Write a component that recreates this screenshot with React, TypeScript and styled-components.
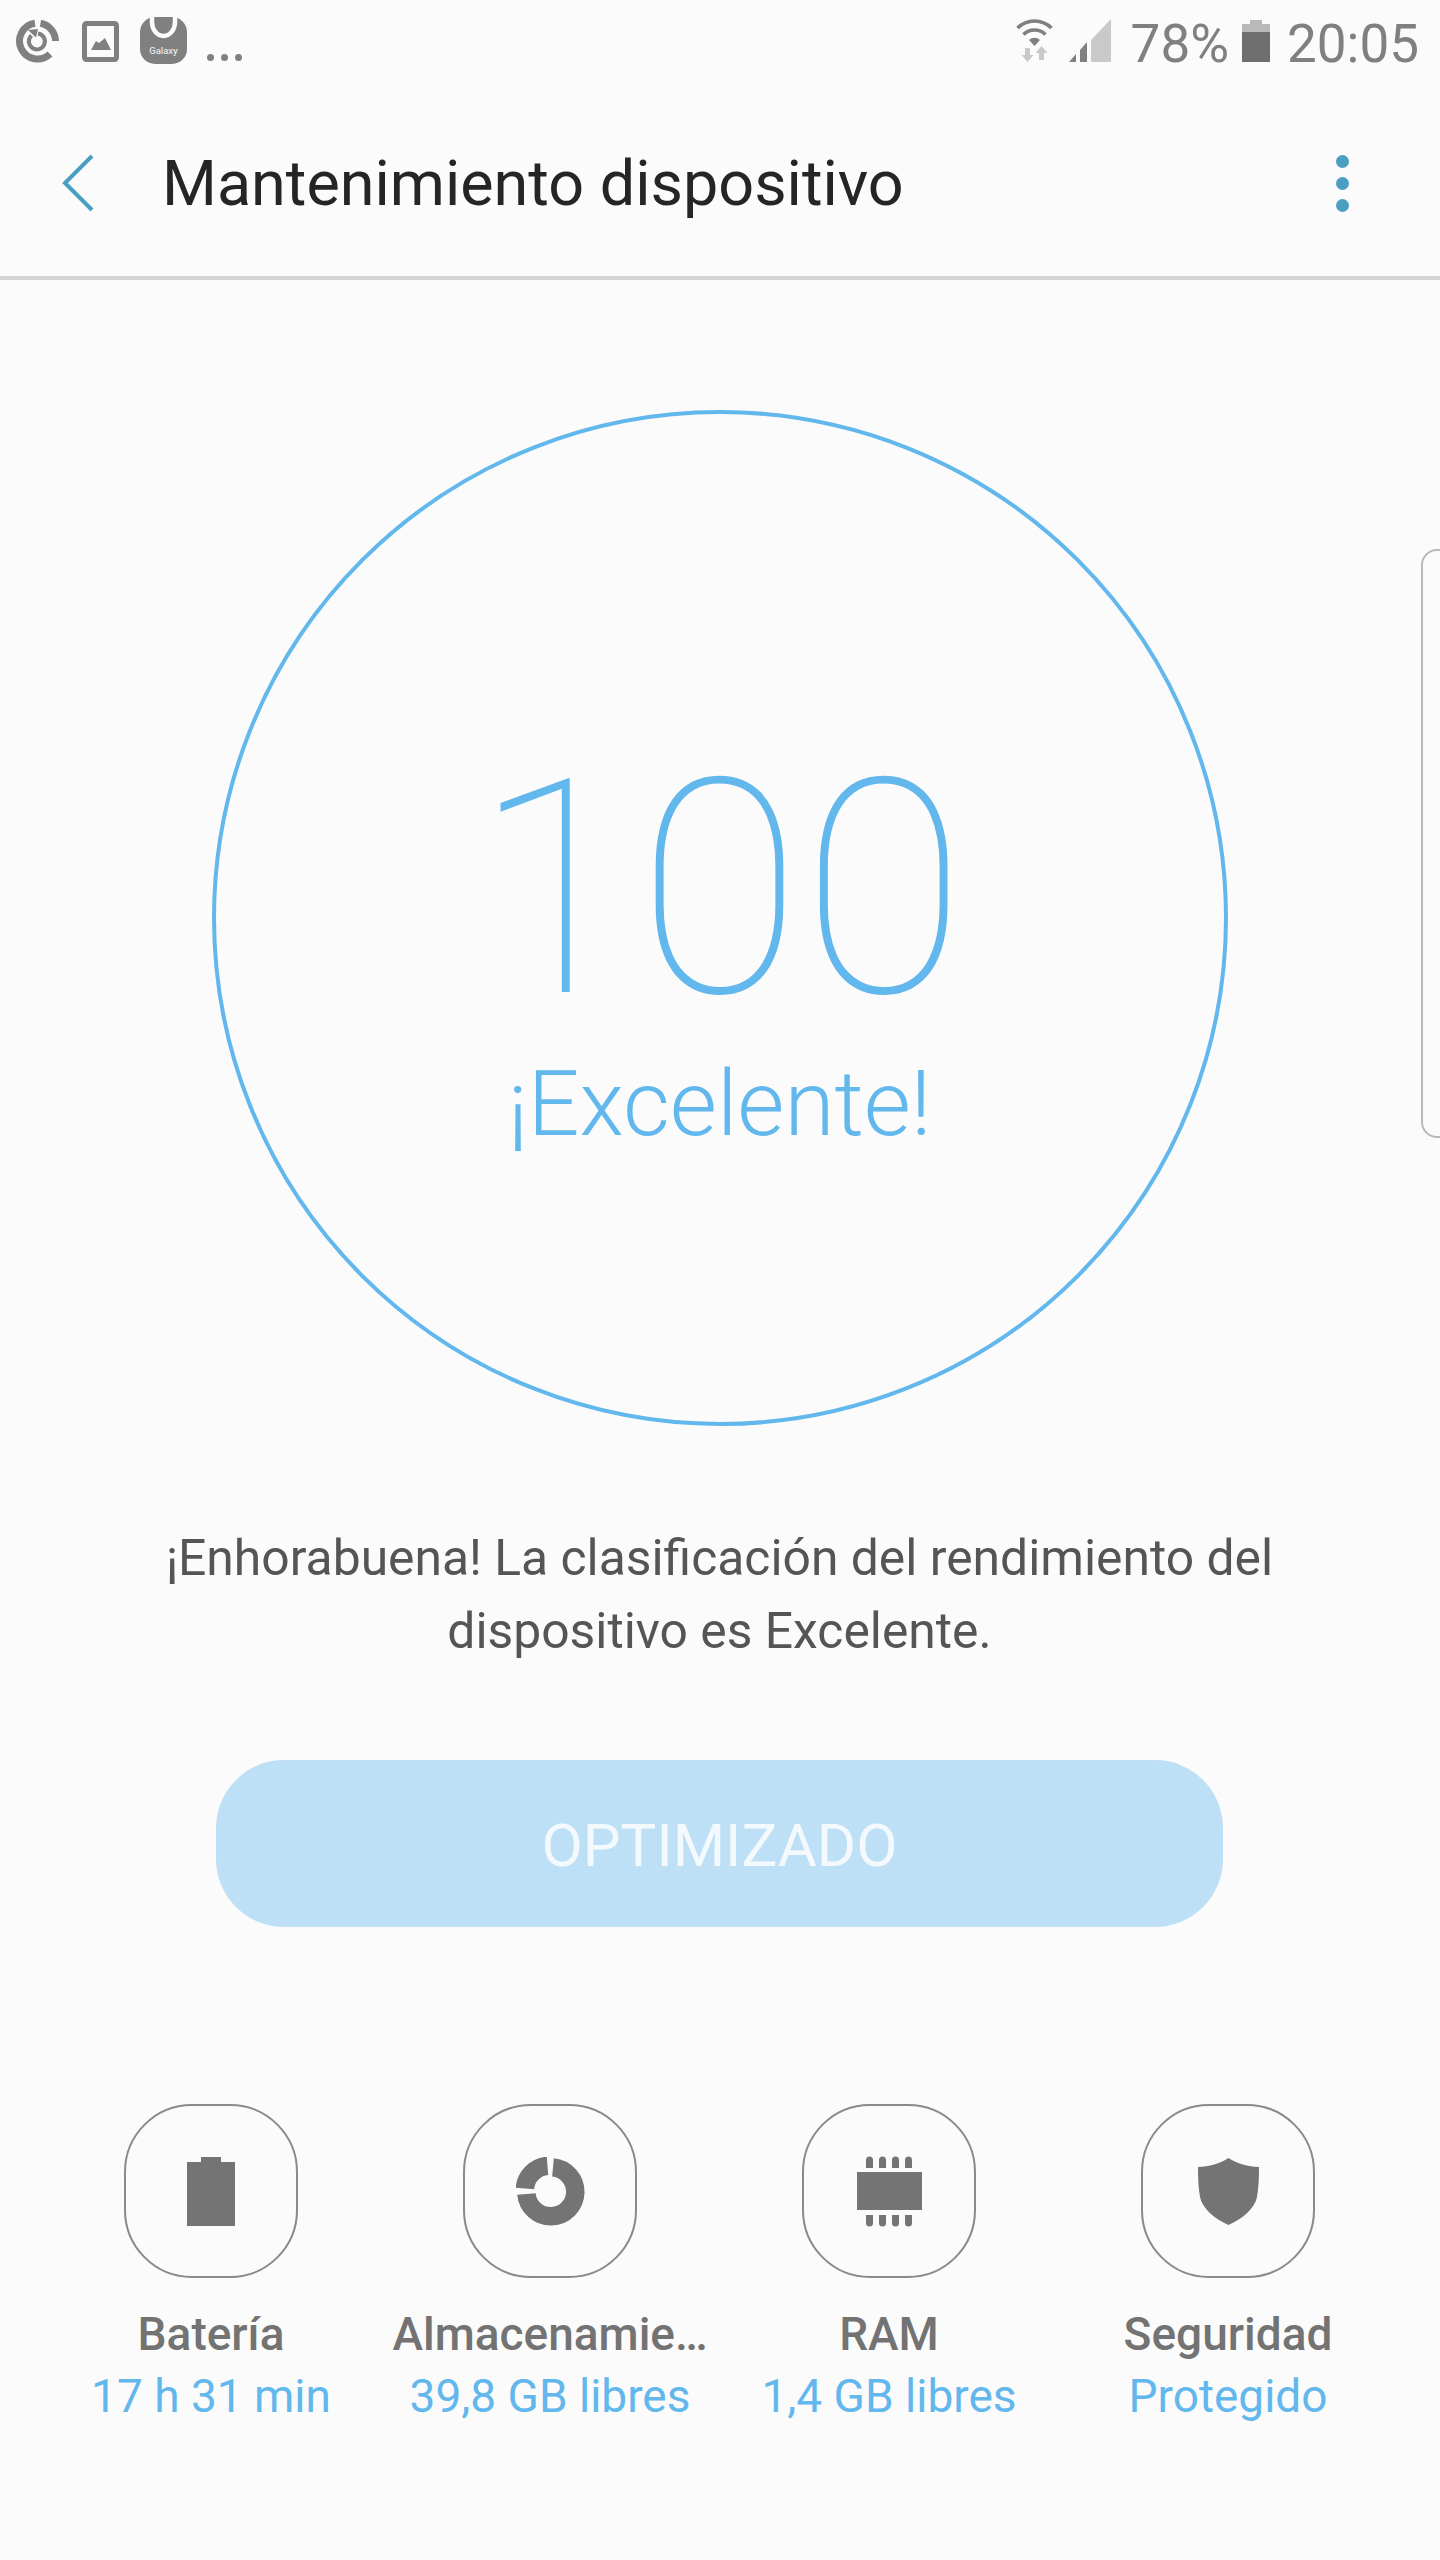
import styled, { createGlobalStyle } from "styled-components";

const GlobalStyle = createGlobalStyle`
  html, body {
    margin: 0;
    padding: 0;
    background: #fbfbfb;
    font-family: Roboto, "Liberation Sans", sans-serif;
  }
`;

const Page = styled.div`
  position: relative;
  width: 1440px;
  height: 2560px;
  overflow: hidden;
  background: #fbfbfb;
`;

const StatusBar = styled.div`
  display: flex;
  justify-content: space-between;
  align-items: flex-start;
  height: 80px;
  padding: 10px 21px 0 15px;
`;

const StatusGroup = styled.div`
  display: flex;
  align-items: flex-start;
`;

const StatusIcon = styled.svg<{ $w: number; $gap?: number }>`
  display: block;
  width: ${(p) => p.$w}px;
  height: 64px;
  margin-left: ${(p) => p.$gap ?? 0}px;
`;

const StatusText = styled.span<{ $gap: number }>`
  margin-left: ${(p) => p.$gap}px;
  font-size: 53px;
  line-height: 68px;
  color: #808080;
`;

const Header = styled.header`
  display: flex;
  align-items: center;
  justify-content: space-between;
  height: 186px;
  padding: 0 91px 0 61px;
  border-bottom: 4px solid #d4d4d4;
`;

const HeaderLeft = styled.div`
  display: flex;
  align-items: center;
  gap: 67px;
`;

const Title = styled.h1`
  margin: 0;
  font-size: 62.9px;
  font-weight: 400;
  color: #252525;
`;

const Dots = styled.div`
  display: flex;
  flex-direction: column;
  gap: 9px;
`;

const Dot = styled.span`
  display: block;
  width: 13px;
  height: 13px;
  border-radius: 50%;
  background: #4a9fc0;
`;

const Main = styled.main`
  display: flex;
  flex-direction: column;
  align-items: center;
  padding: 130px 1px 0 0;
`;

const ScoreCircle = styled.div`
  display: flex;
  flex-direction: column;
  align-items: center;
  box-sizing: border-box;
  width: 1016px;
  height: 1016px;
  padding-top: 326px;
  border: 4px solid #62b7ec;
  border-radius: 50%;
`;

const ScoreValue = styled.div`
  font-size: 300px;
  font-weight: 100;
  line-height: 300px;
  color: #62b7ec;
`;

const ScoreLabel = styled.div`
  margin-top: 14px;
  font-size: 91px;
  font-weight: 300;
  line-height: 100px;
  color: #62b7ec;
`;

const Message = styled.p`
  margin: 96px 0 0;
  font-size: 49.8px;
  line-height: 73px;
  text-align: center;
  color: #555555;
`;

const OptimizeButton = styled.div`
  display: flex;
  align-items: center;
  justify-content: center;
  box-sizing: border-box;
  width: 1007px;
  height: 167px;
  margin-top: 92px;
  padding-top: 3px;
  border-radius: 68px;
  background: #bde0f6;
  font-size: 60px;
  color: #f3f9fd;
`;

const Tiles = styled.section`
  display: grid;
  grid-template-columns: repeat(4, 339px);
  margin-top: 177px;
`;

const Tile = styled.div`
  display: flex;
  flex-direction: column;
  align-items: center;
`;

const TileIcon = styled.div`
  display: flex;
  align-items: center;
  justify-content: center;
  box-sizing: border-box;
  width: 174px;
  height: 174px;
  margin-bottom: 25px;
  border: 2px solid #8a8a8a;
  border-radius: 68px;
`;

const TileName = styled.div`
  font-size: 46px;
  font-weight: 500;
  line-height: 62px;
  color: #737373;
  white-space: nowrap;
`;

const TileValue = styled.div`
  font-size: 46px;
  line-height: 62px;
  color: #62b7ec;
  white-space: nowrap;
`;

const EdgePanel = styled.div`
  position: absolute;
  top: 549px;
  right: -20px;
  width: 35px;
  height: 585px;
  border: 2px solid #b8b8b8;
  border-radius: 16px;
`;

const grey = "#808080";
const soft = "#c9c9c9";
const dark = "#747474";

const tiles = [
  {
    name: "Batería",
    value: "17 h 31 min",
    icon: (
      <svg width="48" height="69" viewBox="0 0 48 69">
        <path fill={dark} d="M14 0h20v5h14v64H0V5h14z" />
      </svg>
    ),
  },
  {
    name: "Almacenamie…",
    value: "39,8 GB libres",
    icon: (
      <svg width="69" height="69" viewBox="0 0 69 69">
        <g fill="none" stroke={dark} strokeWidth="18.5">
          <path d="M37 10.4A24.5 24.5 0 1 1 10.4 37" />
          <path d="M32 9.4A24.5 24.5 0 0 0 9.4 32" transform="translate(-.5 -.5)" />
        </g>
      </svg>
    ),
  },
  {
    name: "RAM",
    value: "1,4 GB libres",
    icon: (
      <svg width="65" height="71" viewBox="0 0 65 71">
        <g fill={dark}>
          <rect x="0" y="16" width="65" height="38" />
          <path d="M9 12V4a3.5 3.5 0 0 1 7 0v8zM22 12V4a3.5 3.5 0 0 1 7 0v8zM35 12V4a3.5 3.5 0 0 1 7 0v8zM48 12V4a3.5 3.5 0 0 1 7 0v8z" />
          <path d="M9 59v8a3.5 3.5 0 0 0 7 0v-8zM22 59v8a3.5 3.5 0 0 0 7 0v-8zM35 59v8a3.5 3.5 0 0 0 7 0v-8zM48 59v8a3.5 3.5 0 0 0 7 0v-8z" />
        </g>
      </svg>
    ),
  },
  {
    name: "Seguridad",
    value: "Protegido",
    icon: (
      <svg width="61" height="67" viewBox="0 0 61 67">
        <path
          fill={dark}
          d="M30.5 0C22 5.5 11 8.5 0 9c0 9 .2 20 2 30 2.500 12 15 22 28.500 28C44 61 56.500 51 59 39c1.800-10 2-21 2-30-11-.5-22-3.500-30.500-9z"
        />
      </svg>
    ),
  },
];

export default function App() {
  return (
    <Page>
      <GlobalStyle />
      <StatusBar>
        <StatusGroup>
          <StatusIcon $w={45} viewBox="15 10 45 64">
            <g fill="none" stroke={grey}>
              <path strokeWidth="7" d="M35 23.200A18 18 0 1 0 50 54" />
              <path strokeWidth="7" d="M40.500 23.300A18 18 0 0 1 55.500 41" />
              <path strokeWidth="4" d="M31.500 35.500A8 8 0 1 0 38 33.500" />
            </g>
            <path fill={grey} d="M28 30l10-1-2 8.500z" />
          </StatusIcon>
          <StatusIcon $w={37} $gap={22} viewBox="82 10 37 64">
            <rect x="84.500" y="23.500" width="32" height="36" rx="2" fill="none" stroke={grey} strokeWidth="5" />
            <path fill={grey} d="M91 50l5-9 3 2 6-5 6 12z" />
          </StatusIcon>
          <StatusIcon $w={47} $gap={21} viewBox="140 10 47 64">
            <rect x="140" y="17" width="47" height="47" rx="15" fill={grey} />
            <path fill="none" stroke="#fbfbfb" strokeWidth="4.500" d="M152 14v8a11.500 14 0 0 0 23 0v-8" />
            <text x="163.500" y="54" textAnchor="middle" fontFamily="Roboto" fontWeight="500" fontSize="9.500" fill="#e4e4e4">
              Galaxy
            </text>
          </StatusIcon>
          <StatusIcon $w={35} $gap={20} viewBox="207 10 35 64">
            <g fill={grey}>
              <circle cx="210.500" cy="57.500" r="3.500" />
              <circle cx="224.500" cy="57.500" r="3.500" />
              <circle cx="238.500" cy="57.500" r="3.500" />
            </g>
          </StatusIcon>
        </StatusGroup>
        <StatusGroup>
          <StatusIcon $w={37} viewBox="1019 10 37 64">
            <g fill="none" stroke={grey} strokeWidth="3.500">
              <path d="M1020.500 28a24 24 0 0 1 34 0" />
              <path d="M1026.500 34.500a15.500 15.500 0 0 1 22 0" />
            </g>
            <path fill={grey} d="M1032 40a8 8 0 0 1 11 0l-5.500 6z" />
            <g fill={soft}>
              <path d="M1028 48h5v7h3.500l-6 7-6-7h3.500z" />
              <path d="M1042 60h5v-7h3.500l-6-7-6 7h3.500z" />
            </g>
          </StatusIcon>
          <StatusIcon $w={42} $gap={16} viewBox="1071 10 42 64">
            <path fill={grey} d="M1071 62h7v-8zM1082 62h7V42l-7 8z" />
            <path fill={soft} d="M1093 62h20V19l-20 21z" />
          </StatusIcon>
          <StatusText $gap={20}>78%</StatusText>
          <StatusIcon $w={28} $gap={13} viewBox="1241 10 28 64">
            <path fill="#b9b9b9" d="M1249 20h12v4h8v8h-28v-8h8z" />
            <rect x="1241" y="32" width="28" height="30" fill="#6f6f6f" />
          </StatusIcon>
          <StatusText $gap={17}>20:05</StatusText>
        </StatusGroup>
      </StatusBar>
      <Header>
        <HeaderLeft>
          <svg width="34" height="58" viewBox="0 0 34 58">
            <path fill="none" stroke="#4a9fc0" strokeWidth="4" d="M31 2L4 29l27 27" />
          </svg>
          <Title>Mantenimiento dispositivo</Title>
        </HeaderLeft>
        <Dots>
          <Dot />
          <Dot />
          <Dot />
        </Dots>
      </Header>
      <Main>
        <ScoreCircle>
          <ScoreValue>100</ScoreValue>
          <ScoreLabel>¡Excelente!</ScoreLabel>
        </ScoreCircle>
        <Message>
          ¡Enhorabuena! La clasificación del rendimiento del
          <br />
          dispositivo es Excelente.
        </Message>
        <OptimizeButton>OPTIMIZADO</OptimizeButton>
        <Tiles>
          {tiles.map((t) => (
            <Tile key={t.name}>
              <TileIcon>{t.icon}</TileIcon>
              <TileName>{t.name}</TileName>
              <TileValue>{t.value}</TileValue>
            </Tile>
          ))}
        </Tiles>
      </Main>
      <EdgePanel />
    </Page>
  );
}
